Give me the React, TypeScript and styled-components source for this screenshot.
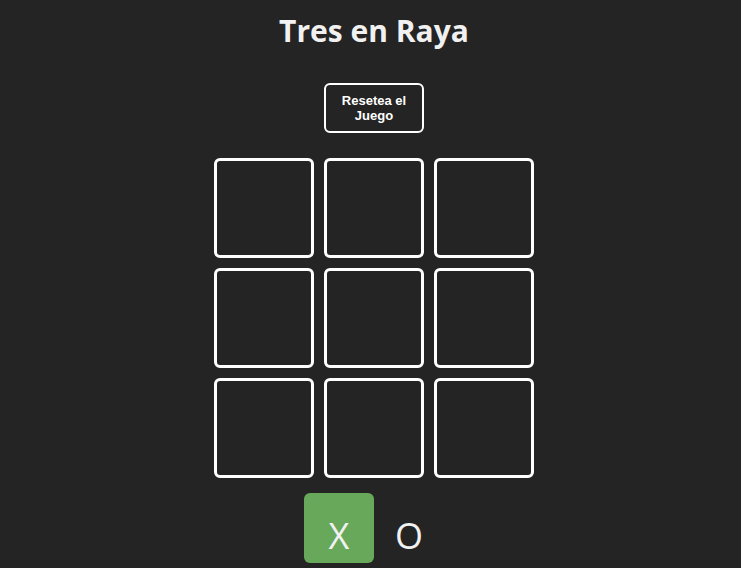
import React, { useState } from "react";
import styled, { createGlobalStyle } from "styled-components";

const Global = createGlobalStyle`
  html, body {
    margin: 0;
    padding: 0;
    background: #242424;
  }
  body {
    padding-left: 7px;
    color: rgba(255, 255, 255, 0.92);
    font-family: "Open Sans", "Noto Sans", sans-serif;
  }
`;

const Main = styled.main`
  display: flex;
  flex-direction: column;
  align-items: center;
  padding-top: 9px;
`;

const Title = styled.h1`
  margin: 0 0 30px;
  font-size: 30px;
  line-height: 44px;
  font-weight: 700;
  color: #f1f1f1;
`;

const ResetButton = styled.button`
  width: 100px;
  height: 50px;
  padding: 0 8px;
  margin: 0 0 25px;
  background: transparent;
  border: 2px solid #ffffff;
  border-radius: 6px;
  color: #ffffff;
  font-family: "Liberation Sans", Arial, sans-serif;
  font-size: 13px;
  font-weight: 700;
  line-height: 15px;
  cursor: pointer;
`;

const Board = styled.section`
  display: grid;
  grid-template-columns: repeat(3, 100px);
  grid-auto-rows: 100px;
  gap: 10px;
`;

const Cell = styled.div`
  box-sizing: border-box;
  border: 3px solid #ffffff;
  border-radius: 6px;
  display: flex;
  align-items: center;
  justify-content: center;
  font-size: 48px;
`;

const TurnRow = styled.section`
  display: flex;
  margin-top: 15px;
`;

const Turn = styled.div<{ $active?: boolean }>`
  width: 70px;
  height: 70px;
  border-radius: 6px;
  display: flex;
  align-items: center;
  justify-content: center;
  padding-top: 14px;
  box-sizing: border-box;
  font-size: 36px;
  color: #f1f1f1;
  background: ${(p) => (p.$active ? "#68a85b" : "transparent")};
`;

export default function App() {
  const [board] = useState<(string | null)[]>(Array(9).fill(null));
  return (
    <>
      <Global />
      <Main>
        <Title>Tres en Raya</Title>
        <ResetButton>Resetea el Juego</ResetButton>
        <Board>
          {board.map((v, i) => (
            <Cell key={i}>{v}</Cell>
          ))}
        </Board>
        <TurnRow>
          <Turn $active>X</Turn>
          <Turn>O</Turn>
        </TurnRow>
      </Main>
    </>
  );
}
